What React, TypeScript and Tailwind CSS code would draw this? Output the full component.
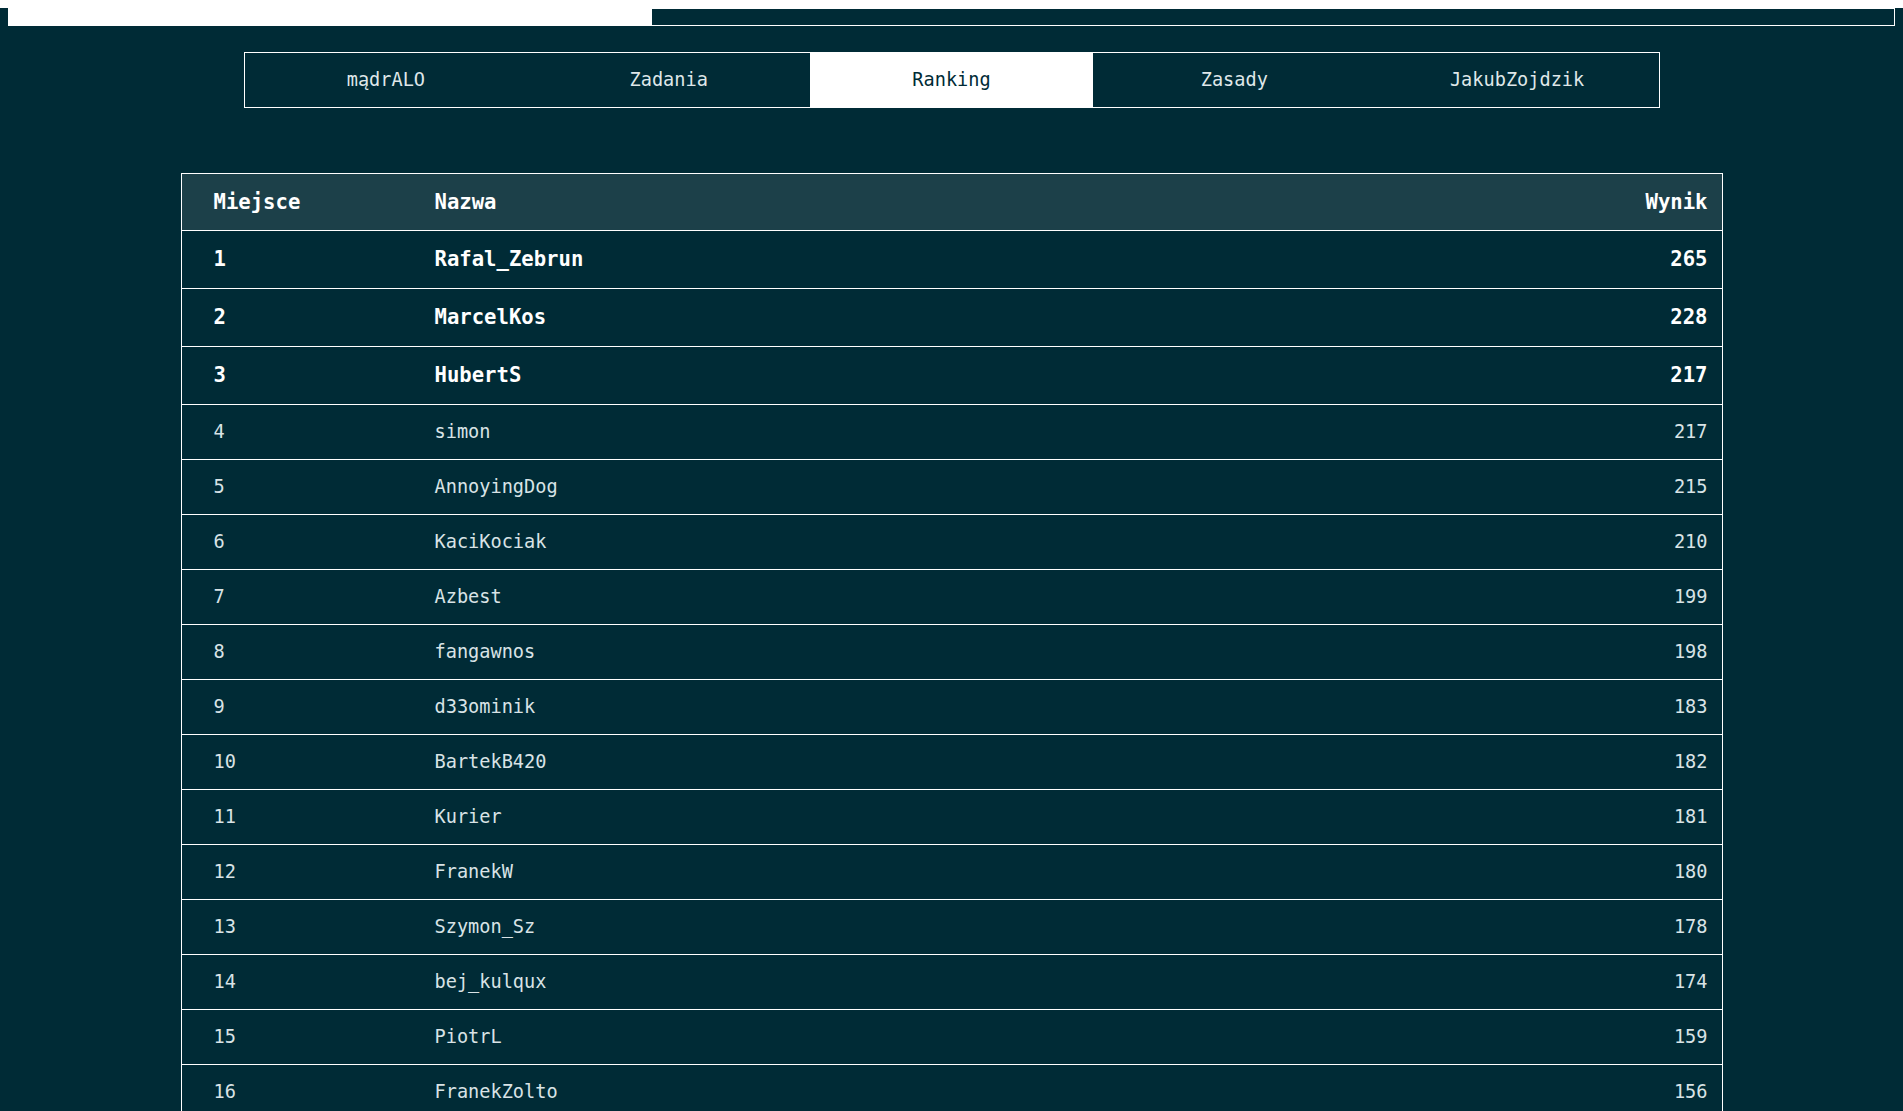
import React from 'react';

const tabs = ['mądrALO', 'Zadania', 'Ranking', 'Zasady', 'JakubZojdzik'];

const ranking: [number, string, number][] = [
    [1, 'Rafal_Zebrun', 265],
    [2, 'MarcelKos', 228],
    [3, 'HubertS', 217],
    [4, 'simon', 217],
    [5, 'AnnoyingDog', 215],
    [6, 'KaciKociak', 210],
    [7, 'Azbest', 199],
    [8, 'fangawnos', 198],
    [9, 'd33ominik', 183],
    [10, 'BartekB420', 182],
    [11, 'Kurier', 181],
    [12, 'FranekW', 180],
    [13, 'Szymon_Sz', 178],
    [14, 'bej_kulqux', 174],
    [15, 'PiotrL', 159],
    [16, 'FranekZolto', 156],
];

const ProgressBar: React.FC = () => (
    <div className="mx-2 mt-2 h-[18px] border border-white">
        <div className="h-full w-[34.1%] bg-white" />
    </div>
);

const Navbar: React.FC = () => (
    <nav className="mx-auto mt-[26px] flex h-[56px] w-[1416px] border border-white">
        {tabs.map((tab) => (
            <a
                key={tab}
                href="#"
                className={
                    tab === 'Ranking'
                        ? 'flex flex-1 items-center justify-center bg-white text-[#002b36]'
                        : 'flex flex-1 items-center justify-center text-[#dfe7e9]'
                }
            >
                {tab}
            </a>
        ))}
    </nav>
);

const RankingTable: React.FC = () => (
    <div className="mx-auto mt-[65px] w-[1542px] border border-b-0 border-white">
        <div className="flex h-[57px] items-center border-b border-white bg-[#1c4049] text-[20.6px] font-bold text-white">
            <div className="w-[253px] pl-8">Miejsce</div>
            <div className="flex-1">Nazwa</div>
            <div className="pr-[14px]">Wynik</div>
        </div>
        {ranking.map(([place, name, score]) =>
            place <= 3 ? (
                <div
                    key={place}
                    className="flex h-[58px] items-center border-b border-white text-[20.6px] font-bold text-white"
                >
                    <div className="w-[253px] pl-8">{place}</div>
                    <div className="flex-1">{name}</div>
                    <div className="pr-[14px]">{score}</div>
                </div>
            ) : (
                <div
                    key={place}
                    className="flex h-[55px] items-center border-b border-white text-[18.6px] text-[#d9e3e6]"
                >
                    <div className="w-[253px] pl-8">{place}</div>
                    <div className="flex-1">{name}</div>
                    <div className="pr-[14px]">{score}</div>
                </div>
            )
        )}
    </div>
);

const App: React.FC = () => {
    return (
        <div
            className="min-h-screen bg-[#002b36] pb-10 text-[18.6px]"
            style={{ fontFamily: '"DejaVu Sans Mono", "Liberation Mono", monospace' }}
        >
            <ProgressBar />
            <Navbar />
            <RankingTable />
        </div>
    );
};

export default App;
